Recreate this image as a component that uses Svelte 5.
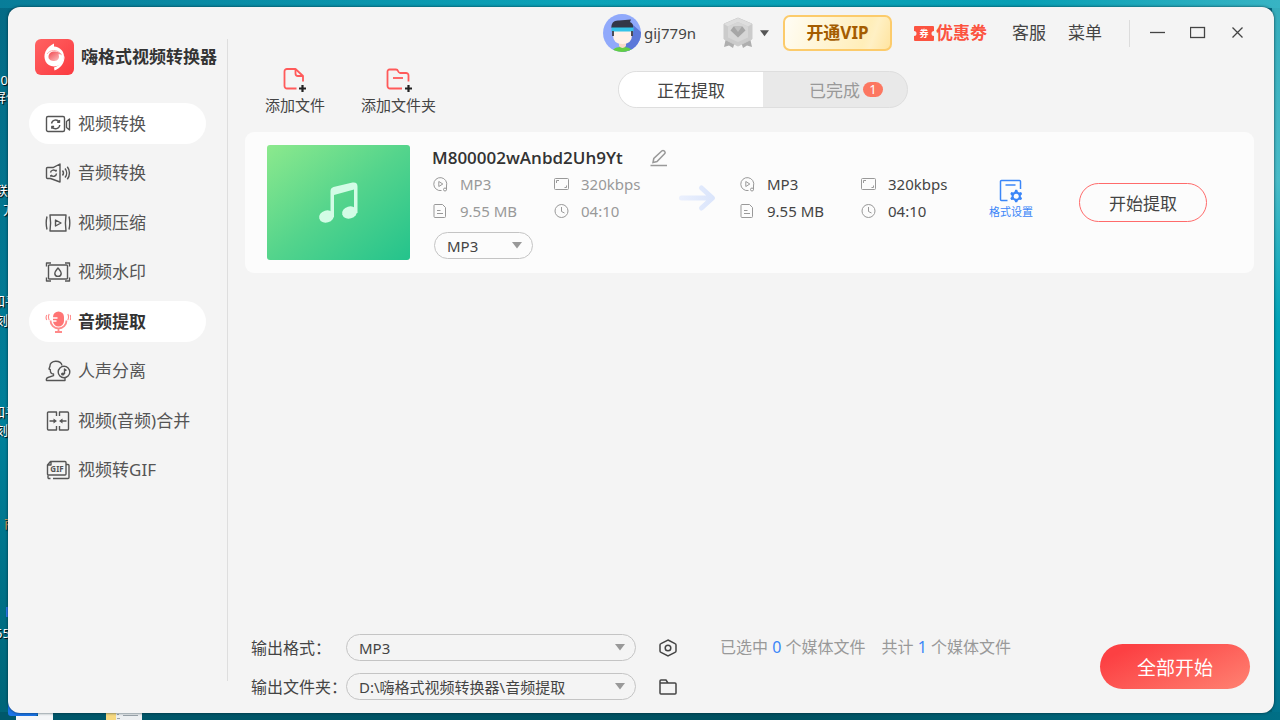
<script>
  const navItems = [
    { id: "video", label: "视频转换", hover: true },
    { id: "audio", label: "音频转换" },
    { id: "compress", label: "视频压缩" },
    { id: "watermark", label: "视频水印" },
    { id: "extract", label: "音频提取" },
    { id: "vocal", label: "人声分离" },
    { id: "merge", label: "视频(音频)合并" },
    { id: "gif", label: "视频转GIF" }
  ];

  const formats = ["MP3", "WAV", "M4A", "FLAC"];
  const folders = ["D:\\嗨格式视频转换器\\音频提取"];

  // Labels of the desktop shortcuts that stick out behind the window
  const shortcuts = [
    { text: "10", top: 71, left: -7 },
    { text: "屏保", top: 88, left: -7 },
    { text: "联系", top: 181, left: -5 },
    { text: "方", top: 200, left: 3 },
    { text: "知乎", top: 292, left: -8 },
    { text: "刻录", top: 311, left: -5 },
    { text: "知乎", top: 403, left: -8 },
    { text: "刻录", top: 421, left: -5 },
    { text: "商", top: 514, left: 4, orange: true },
    { text: "555", top: 624, left: -5 }
  ];

  const file = {
    name: "M800002wAnbd2Uh9Yt",
    format: "MP3",
    bitrate: "320kbps",
    size: "9.55 MB",
    duration: "04:10"
  };

  let active = $state("extract");
  let tab = $state("running");
  let rowFormat = $state("MP3");
  let outFormat = $state("MP3");
  let outFolder = $state(folders[0]);
</script>

{#snippet caret()}
  <svg class="caret" width="10" height="7" viewBox="0 0 10 7" aria-hidden="true">
    <path d="M0 0h10L5 6.5z" fill="currentColor" />
  </svg>
{/snippet}

{#snippet navIcon(id)}
  <svg class="nav-icon" viewBox="0 0 26 22" width="26" height="22" aria-hidden="true">
    {#if id === "video"}
      <rect x="1.5" y="3.5" width="18" height="15" rx="1.5" />
      <path d="M21.500 8.500l3-2.500v11l-3-2.500z" />
      <path d="M6.5 10.5a4.2 4.2 0 0 1 7.6-1.6M14.8 12a4.2 4.2 0 0 1-7.7 1.8M14.5 7v2.300h-2.300M6.800 15.800v-2.300h2.300" />
    {:else if id === "audio"}
      <path d="M8.500 5.500H2.500a1 1 0 0 0-1 1v9a1 1 0 0 0 1 1h3l9.500 3.500v-18L8 5.700" />
      <path d="M5.500 10.500a3 3 0 0 1 5.500-1M11.500 11.500a3 3 0 0 1-5.500 1.500M11.200 7.800v1.800M5.800 14.800V13" />
      <path d="M17.500 8.500a4 4 0 0 1 0 5M20 6.500a7 7 0 0 1 0 9M22.300 4.800a10 10 0 0 1 0 12.400" />
    {:else if id === "compress"}
      <path d="M5 3h16q-1.200 8 0 16H5q1.200-8 0-16z" />
      <path d="M2 4.500q-1.600 6.500 0 13M24 4.500q1.600 6.500 0 13M10.500 8v6l5.500-3z" />
    {:else if id === "watermark"}
      <path d="M1.500 5.500V2H6M20 2h4.500v3.500M24.500 16.500V20H20M6 20H1.500v-3.500" />
      <rect x="3.500" y="4" width="19" height="14" rx="1" />
      <path d="M13 7c2 2.500 3.200 3.600 3.200 5.200a3.200 3.200 0 0 1-6.400 0C9.800 10.600 11 9.500 13 7z" />
    {:else if id === "extract"}
      <g class="mic">
        <rect x="8" y="0.500" width="11" height="15" rx="5.500" fill="#ff7474" stroke="none" />
        <path d="M5.500 9.500a8 8 0 0 0 16 0M13.500 17.500V21M10 21h7" stroke-width="1.800" />
        <path d="M7.500 7h5M7.500 10h4" stroke="#fff" stroke-width="1.400" />
        <path d="M4.200 3q-1.500 3 0 6M1.800 4q-1.500 2.500 0 5M22.800 3q1.500 3 0 6M25.200 4q1 2.500 0 5" stroke-width="1.100" />
      </g>
    {:else if id === "vocal"}
      <path d="M17 5.500C16.500 2.500 14 1.200 10.800 1.200 7 1.200 4.800 3.500 5 6l-1 3 1.300.6c-.2 3 .7 4.200 3.200 4.400v1.700L3 17.500c-1.500.6-2 1.500-1.500 3H20v-2.500" />
      <circle cx="19" cy="12" r="5.800" />
      <path d="M19.500 14V9l2 1.500" />
      <ellipse cx="17.800" cy="14" rx="1.800" ry="1.500" fill="#555" stroke="none" />
    {:else if id === "merge"}
      <path d="M11.500 6V2H3.500a1 1 0 0 0-1 1v16a1 1 0 0 0 1 1h8v-4M14.500 6V2h8a1 1 0 0 1 1 1v16a1 1 0 0 1-1 1h-8v-4" />
      <path d="M4.500 11h5M21.500 11h-5" />
      <path d="M8.500 8.500v5l3.500-2.500zM17.500 8.500v5L14 11z" fill="#555" stroke="none" />
    {:else}
      <path d="M5.500 2.500H20a1 1 0 0 1 1 1V15a1 1 0 0 1-1 1H3.500a1 1 0 0 1-1-1V6zM6 2.500V6H2.500" />
      <path d="M21 5.500h2a1 1 0 0 1 1 1v12a1 1 0 0 1-1 1H8M5.500 19.500H4a1 1 0 0 1-1-1V16.500" />
      <text x="12" y="13" text-anchor="middle">GIF</text>
    {/if}
  </svg>
{/snippet}

{#snippet metaIcon(kind)}
  <svg class="meta-icon" viewBox="0 0 18 16" width="18" height="16" aria-hidden="true">
    {#if kind === "format"}
      <path d="M9.500 14.500A6.500 6.500 0 1 1 14.500 10" />
      <path d="M6.800 5.500v5L10.800 8z" />
      <circle cx="13" cy="13.500" r="1.500" />
      <path d="M14.500 13.500V10" />
    {:else if kind === "bitrate"}
      <rect x="1.500" y="2.500" width="14" height="11" rx="1" />
      <path d="M3.500 7V4.500H6M13.500 9.500v2H11.500" />
    {:else if kind === "size"}
      <path d="M3 1.500h7.500l3 3v9a1 1 0 0 1-1 1H3a1 1 0 0 1-1-1v-11a1 1 0 0 1 1-1z" />
      <path d="M5 7.500h3.500M5 10.500h6" />
    {:else}
      <circle cx="8.500" cy="8" r="6.500" />
      <path d="M8.500 4v4.500l3 1.500" />
    {/if}
  </svg>
{/snippet}

{#snippet meta(muted)}
  <ul class="meta" class:muted>
    <li>{@render metaIcon("format")}{file.format}</li>
    <li>{@render metaIcon("bitrate")}{file.bitrate}</li>
    <li>{@render metaIcon("size")}{file.size}</li>
    <li>{@render metaIcon("duration")}{file.duration}</li>
  </ul>
{/snippet}

<div class="desktop">
  {#each shortcuts as item}
    <span class="shortcut" class:orange={item.orange} style="top: {item.top}px; left: {item.left}px">{item.text}</span>
  {/each}
  <svg class="desk-files" width="150" height="120" viewBox="0 0 150 120" aria-hidden="true">
    <rect x="6" y="7" width="8" height="10" fill="#2f7df0" />
    <rect x="8" y="100" width="30" height="16" rx="3" fill="#1b74e8" />
    <rect x="16" y="116" width="37" height="4" fill="#f4f6f8" />
    <path d="M38 110h15v6H38z" fill="#f4f6f8" />
    <rect x="106" y="110" width="10" height="10" fill="#f7d980" />
    <rect x="116" y="110" width="26" height="10" fill="#eceff1" />
    <path d="M117 114.500h2M117 118.500h3M123 115.500h15" stroke="#9aa4aa" />
  </svg>

  <div class="window">
    <aside>
      <div class="brand">
        <svg width="39" height="36" viewBox="0 0 39 36" aria-hidden="true">
          <defs>
            <linearGradient id="brandRed" x1="0" y1="0" x2="1" y2="1">
              <stop offset="0" stop-color="#ff6262" />
              <stop offset="1" stop-color="#fb3a40" />
            </linearGradient>
            <linearGradient id="brandSwirl" x1="0" y1="0" x2="1" y2="1">
              <stop offset="0" stop-color="#f0474d" />
              <stop offset="1" stop-color="#ffd0d0" />
            </linearGradient>
          </defs>
          <rect width="39" height="36" rx="6" fill="url(#brandRed)" />
          <path d="M19 4.500c-3.500 1.500-7 4.500-8.500 8C7.500 19 11 27.500 19 27.500c5.500 0 10-4 10-10 0-5.500-4-9.500-10-10z" fill="#fff" />
          <path d="M19.500 31.500c6-2.500 10.500-7.500 10-15-1.500 6.500-5 10-10.500 12z" fill="#fff" />
          <path d="M13.500 18c0-3.500 2.500-5.500 6-5.500 3 0 7 1 7.500 4-1.500-1.500-3-1.500-3.500-1 1.500 3.500-.5 6.500-4 6.500-3.500 0-6-1.500-6-4z" fill="url(#brandSwirl)" />
          <path d="M12 15c3-4.500 9.500-4.500 13-1" fill="none" stroke="#ffb3b3" />
        </svg>
        <h1>嗨格式视频转换器</h1>
      </div>
      <nav>
        {#each navItems as item}
          <button
            class="nav-item"
            class:hover={item.hover}
            class:active={active === item.id}
            onclick={() => (active = item.id)}
          >
            {@render navIcon(item.id)}
            <span>{item.label}</span>
          </button>
        {/each}
      </nav>
    </aside>

    <main>
      <header>
        <button class="user">
          <svg width="38" height="38" viewBox="0 0 38 38" aria-hidden="true">
            <defs>
              <clipPath id="avatarClip"><circle cx="19" cy="19" r="19" /></clipPath>
            </defs>
            <g clip-path="url(#avatarClip)">
              <rect width="38" height="38" fill="#90a9fb" />
              <path d="M29 10l9 8v20H20z" fill="#5b78d9" />
              <path d="M9 38c1-4 5-5 10-5s10 1 10 5z" fill="#62cf45" />
              <path d="M16 26h7v6q-3.500 4-7 0z" fill="#f9d9c9" />
              <path d="M10 13h19v8q0 9-9.500 9T10 21z" fill="#fff1e9" />
              <path d="M8.500 14C8 9 11 6 16 6.500L28 5.500l-1 2.500c2.500 1 3.500 3 3 6z" fill="#333748" />
              <path d="M8.500 13.500h22v4h-22z" fill="#35c3e8" />
              <path d="M9 17h2v5H9zM28 17h2v5h-2z" fill="#4b4b57" />
            </g>
          </svg>
          <span>gij779n</span>
        </button>
        <button class="level" aria-label="会员等级">
          <svg width="32" height="32" viewBox="0 0 32 32" aria-hidden="true">
            <path d="M4 21l-2 9 5-1.500 4 2.500 2-6zM28 21l2 9-5-1.500-4 2.500-2-6z" fill="#aeaeae" />
            <path d="M16 1l14 6v15l-14 7-14-7V7z" fill="#cbcbcb" stroke="#cbcbcb" stroke-linejoin="round" />
            <path d="M16 1l14 6-4 2.500L16 5 6 9.500 2 7z" fill="#dedede" />
            <path d="M16 5l10 4.500v11L16 25 6 20.500v-11z" fill="#d6d6d6" />
            <path d="M11.500 9.500h9l3 4L16 20.500l-7.500-7z" fill="#a6a6a6" />
            <path d="M12 9.500h8l-4 5.500z" fill="#c0c0c0" />
          </svg>
          {@render caret()}
        </button>
        <button class="vip">开通VIP</button>
        <button class="coupon">
          <svg width="20" height="15" viewBox="0 0 20 15" aria-hidden="true">
            <path d="M1 0h18a1 1 0 0 1 1 1v4a2.500 2.500 0 0 0 0 5v4a1 1 0 0 1-1 1H1a1 1 0 0 1-1-1v-4a2.500 2.500 0 0 0 0-5V1a1 1 0 0 1 1-1z" fill="#fc5340" />
            <text x="10" y="11" text-anchor="middle">券</text>
          </svg>
          <span>优惠劵</span>
        </button>
        <button class="link">客服</button>
        <button class="link">菜单</button>
        <div class="window-controls">
          <button aria-label="最小化">
            <svg width="16" height="16" viewBox="0 0 16 16"><path d="M0 7.500h15" /></svg>
          </button>
          <button aria-label="最大化">
            <svg width="16" height="16" viewBox="0 0 16 16"><rect x="0.500" y="2.500" width="14" height="10" /></svg>
          </button>
          <button aria-label="关闭">
            <svg width="16" height="16" viewBox="0 0 16 16"><path d="M2.500 2.500l10 10M12.500 2.500l-10 10" /></svg>
          </button>
        </div>
      </header>

      <div class="toolbar">
        <button class="add">
          <svg width="26" height="26" viewBox="0 0 26 26" aria-hidden="true">
            <path d="M14.500 21.500H5a2.500 2.500 0 0 1-2.500-2.500V4.500A2.500 2.500 0 0 1 5 2h8.500l7.500 7v5.500" />
            <path d="M13.500 2v4.500A2.500 2.500 0 0 0 16 9h5" />
            <path class="plus" d="M20.500 18v7M17 21.500h7" />
          </svg>
          <span>添加文件</span>
        </button>
        <button class="add">
          <svg width="28" height="26" viewBox="0 0 28 26" aria-hidden="true">
            <path d="M17 21.500H5a2.500 2.500 0 0 1-2.500-2.500V4.500A2 2 0 0 1 4.500 2.500h6.500q1.500 0 2 1.500t2 2h6A2.500 2.500 0 0 1 23.500 8.500v6" />
            <path d="M8 11h10" />
            <path class="plus" d="M23.500 18v7M20 21.500h7" />
          </svg>
          <span>添加文件夹</span>
        </button>
        <div class="tabs" role="tablist">
          <button role="tab" aria-selected={tab === "running"} onclick={() => (tab = "running")}>正在提取</button>
          <button role="tab" aria-selected={tab === "done"} onclick={() => (tab = "done")}>
            已完成<span class="count">1</span>
          </button>
        </div>
      </div>

      <section class="card">
        <svg class="thumb" width="143" height="115" viewBox="0 0 143 115" aria-hidden="true">
          <defs>
            <linearGradient id="thumbGreen" x1="0" y1="0" x2="1" y2="1">
              <stop offset="0" stop-color="#8ce98d" />
              <stop offset="0.500" stop-color="#54d48c" />
              <stop offset="1" stop-color="#24c38c" />
            </linearGradient>
          </defs>
          <rect width="143" height="115" rx="3" fill="url(#thumbGreen)" />
          <g fill="#d3fce6">
            <ellipse cx="59.500" cy="71.500" rx="7.500" ry="6" transform="rotate(-15 59.500 71.500)" />
            <ellipse cx="82.500" cy="67.500" rx="7.500" ry="6" transform="rotate(-15 82.500 67.500)" />
            <path d="M63.500 72V46q0-3 3-4l19-4.500q5-.8 5 4V68h-3.500V44.500L67 50v22z" />
          </g>
        </svg>

        <div class="source">
          <div class="name">
            <h2>{file.name}</h2>
            <button aria-label="重命名">
              <svg width="18" height="18" viewBox="0 0 18 18">
                <path d="M0.500 16.500h16.500M3 13.500l.8-4L12 1.800q1-.8 2 0l.8.8q.8 1 0 2L7 12.500z" />
              </svg>
            </button>
          </div>
          {@render meta(true)}
          <div class="picker small">
            <select bind:value={rowFormat} aria-label="格式">
              {#each formats as f}<option>{f}</option>{/each}
            </select>
            {@render caret()}
          </div>
        </div>

        <svg class="arrow" width="38" height="28" viewBox="0 0 38 28" aria-hidden="true">
          <defs>
            <linearGradient id="arrowBlue" gradientUnits="userSpaceOnUse" x1="0" y1="0" x2="38" y2="0">
              <stop offset="0" stop-color="#ebf0fd" />
              <stop offset="1" stop-color="#d9e4fb" />
            </linearGradient>
          </defs>
          <path d="M2.500 14H33M22.500 4l11 10-11 10" />
        </svg>

        <div class="target">{@render meta(false)}</div>

        <button class="settings">
          <svg width="24" height="24" viewBox="0 0 24 24" aria-hidden="true">
            <path d="M8.500 21.500H2.500a1 1 0 0 1-1-1v-18a1 1 0 0 1 1-1h18a1 1 0 0 1 1 1V10M6.500 6h10" />
            <path d="M14.300 13.500l1.200-.8.700-2h2l.700 2 1.200.8 2-.4 1 1.800-1.300 1.600v1.300l1.300 1.500-1 1.800-2-.4-1.200.8-.7 1.800h-2l-.7-1.800-1.200-.8-2 .4-1-1.800 1.300-1.500v-1.300l-1.300-1.600 1-1.800z" fill="#3b86f8" stroke="none" />
            <circle cx="17.200" cy="17.200" r="2.500" fill="#fcfcfc" stroke="none" />
          </svg>
          <span>格式设置</span>
        </button>
        <button class="start">开始提取</button>
      </section>

      <footer>
        <div class="output">
          <label for="out-format">输出格式：</label>
          <div class="picker">
            <select id="out-format" bind:value={outFormat}>
              {#each formats as f}<option>{f}</option>{/each}
            </select>
            {@render caret()}
          </div>
          <button class="tool" aria-label="输出设置">
            <svg width="20" height="20" viewBox="0 0 20 20">
              <path d="M10 2l7 3.600q1 .4 1 1.400v6q0 1-1 1.400L10 18l-7-3.600q-1-.4-1-1.400V7q0-1 1-1.400z" />
              <circle cx="10" cy="10" r="2.800" />
            </svg>
          </button>

          <label for="out-folder">输出文件夹：</label>
          <div class="picker">
            <select id="out-folder" bind:value={outFolder}>
              {#each folders as f}<option>{f}</option>{/each}
            </select>
            {@render caret()}
          </div>
          <button class="tool" aria-label="打开文件夹">
            <svg width="20" height="20" viewBox="0 0 20 20">
              <path d="M3 17a1 1 0 0 1-1-1V4a1 1 0 0 1 1-1h5l2 3h7a1 1 0 0 1 1 1v9a1 1 0 0 1-1 1zM2 6h8" />
            </svg>
          </button>
        </div>

        <p class="status">
          <span>已选中 <b>0</b> 个媒体文件</span>
          <span>共计 <b>1</b> 个媒体文件</span>
        </p>
        <button class="start-all">全部开始</button>
      </footer>
    </main>
  </div>
</div>

<style>
  :global(body) {
    margin: 0;
    font-family: "Noto Sans", "Noto Sans CJK SC", sans-serif;
    color: #444;
  }

  * {
    box-sizing: border-box;
  }

  button {
    padding: 0;
    border: none;
    background: none;
    font: inherit;
    color: inherit;
    white-space: nowrap;
    cursor: pointer;
  }

  svg {
    display: block;
    flex: none;
  }

  h1,
  h2,
  p,
  ul {
    margin: 0;
    padding: 0;
  }

  .desktop {
    position: relative;
    display: flex;
    min-height: 100vh;
    padding: 7px 6px 7px 8px;
    overflow: hidden;
    background:
      linear-gradient(to right, #087d99, #0ba3b8 45%, #079fb4 80%, #38b4c4) top / 100% 8px no-repeat,
      linear-gradient(to right, #00586b, #00505f 60%, #006f86) bottom / 100% 8px no-repeat,
      linear-gradient(#35acbb, #49bcc8 25%, #00a3b7 45%, #008ea5 75%, #00718a) right / 8px 100% no-repeat,
      linear-gradient(#046a85, #00809a 60%, #006477);
  }

  .shortcut {
    position: absolute;
    font-size: 13px;
    line-height: 18px;
    color: #fff;
    white-space: nowrap;
    text-shadow: 1px 1px 1px #000;
  }

  .shortcut.orange {
    color: #f0a35c;
  }

  .desk-files {
    position: absolute;
    left: 0;
    bottom: 0;
  }

  .window {
    position: relative;
    display: flex;
    flex: 1;
    min-width: 0;
    border-radius: 12px;
    background: #f4f4f4;
    box-shadow: 0 0 3px rgba(0, 30, 40, 0.8);
  }

  aside {
    flex: none;
    width: 220px;
    margin: 32px 0;
    padding-left: 21px;
    border-right: 1px solid #dedede;
  }

  .brand {
    display: flex;
    align-items: center;
    gap: 7px;
    height: 36px;
    padding-left: 6px;
  }

  .brand h1 {
    font-size: 17px;
    line-height: 24px;
    font-weight: 700;
    color: #333;
    white-space: nowrap;
  }

  nav {
    display: flex;
    flex-direction: column;
    justify-content: space-between;
    height: 388px;
    margin-top: 28px;
  }

  .nav-item {
    display: flex;
    align-items: center;
    gap: 7px;
    width: 177px;
    height: 41px;
    padding-left: 16px;
    border-radius: 21px;
    font-size: 17px;
    line-height: 24px;
    color: #555;
  }

  .nav-item.hover,
  .nav-item.active {
    background: #fff;
  }

  .nav-item.active {
    font-weight: 700;
    color: #333;
  }

  .nav-icon {
    fill: none;
    stroke: #555;
    stroke-width: 1.4;
    stroke-linejoin: round;
  }

  .nav-icon text {
    fill: #555;
    stroke: none;
    font-size: 8px;
    font-weight: 700;
  }

  .mic {
    stroke: #ff8a8a;
  }

  main {
    display: flex;
    flex: 1;
    flex-direction: column;
    min-width: 0;
    padding: 7px 20px 13px 17px;
  }

  header {
    display: flex;
    align-items: center;
    justify-content: flex-end;
    height: 38px;
    font-size: 17px;
    line-height: 24px;
  }

  .user {
    display: flex;
    align-items: center;
    gap: 3px;
    font-size: 15px;
  }

  .level {
    display: flex;
    align-items: center;
    gap: 6px;
    margin-left: 26px;
    color: #555;
  }

  .level .caret {
    width: 9px;
  }

  .vip {
    width: 109px;
    height: 36px;
    margin-left: 14px;
    border: 2px solid #fccb6b;
    border-radius: 7px;
    background: linear-gradient(110deg, #fffdf5, #ffeeb9 75%, #fff0c4 82%, #ffe4a0);
    line-height: 24px;
    font-weight: 700;
    color: #a45c00;
  }

  .coupon {
    display: flex;
    align-items: center;
    gap: 2px;
    margin-left: 22px;
    font-weight: 700;
    color: #fc5340;
  }

  .coupon text {
    fill: #fff;
    font-size: 9px;
  }

  .link {
    margin-left: 22px;
  }

  .coupon + .link {
    margin-left: 25px;
  }

  .window-controls {
    display: flex;
    align-items: center;
    gap: 24px;
    height: 27px;
    margin-left: 27px;
    padding: 0 8px 0 20px;
    border-left: 1px solid #dcdcdc;
  }

  .window-controls svg {
    fill: none;
    stroke: #444;
    stroke-width: 1.3;
  }

  .toolbar {
    display: flex;
    align-items: flex-start;
    height: 56px;
    margin-top: 13px;
    padding-left: 20px;
  }

  .add {
    display: flex;
    flex-direction: column;
    align-items: center;
    gap: 2px;
    margin-top: 2px;
    font-size: 15px;
    line-height: 20px;
  }

  .add + .add {
    margin-left: 36px;
  }

  .add svg {
    fill: none;
    stroke: #ff5a5a;
    stroke-width: 1.8;
    stroke-linejoin: round;
  }

  .add .plus {
    stroke: #222;
    stroke-width: 2.2;
  }

  .tabs {
    display: grid;
    grid-template-columns: 1fr 1fr;
    width: 290px;
    height: 37px;
    margin: 6px 0 0 182px;
    border: 1px solid #dedede;
    border-radius: 19px;
    overflow: hidden;
    background: #e9e9e9;
    font-size: 17px;
  }

  .tabs button {
    display: flex;
    align-items: center;
    justify-content: center;
    color: #999;
  }

  .tabs button + button {
    padding-left: 22px;
  }

  .tabs button[aria-selected="true"] {
    background: #fff;
    color: #444;
  }

  .count {
    width: 20px;
    margin-left: 3px;
    border-radius: 8px;
    background: #fc7761;
    font-size: 13px;
    line-height: 15px;
    color: #fff;
  }

  .card {
    display: flex;
    align-items: center;
    margin-top: 11px;
    padding: 13px 47px 13px 22px;
    border-radius: 9px;
    background: #fcfcfc;
  }

  .thumb {
    margin-right: 22px;
  }

  .source {
    align-self: flex-start;
    width: 247px;
  }

  .name {
    display: flex;
    align-items: center;
    gap: 27px;
    height: 25px;
  }

  .name h2 {
    font-family: "Open Sans", "Noto Sans", sans-serif;
    font-size: 17px;
    line-height: 24px;
    font-weight: 600;
    color: #333;
  }

  .name svg {
    fill: none;
    stroke: #999;
    stroke-width: 1.5;
  }

  .meta {
    display: grid;
    grid-template-columns: 121px 1fr;
    grid-auto-rows: 27px;
    list-style: none;
    font-size: 15px;
    line-height: 20px;
    color: #444;
  }

  .meta.muted {
    color: #999;
  }

  .meta li {
    display: flex;
    align-items: center;
    gap: 10px;
    white-space: nowrap;
  }

  .meta-icon {
    fill: none;
    stroke: #999;
    stroke-width: 1;
  }

  .picker {
    display: grid;
    align-items: center;
    width: 290px;
    color: #999;
  }

  .picker select {
    grid-area: 1 / 1;
    width: 100%;
    height: 27px;
    padding: 0 32px 0 12px;
    border: 1px solid #c4c4c4;
    border-radius: 14px;
    appearance: none;
    background: transparent;
    font: inherit;
    font-size: 15px;
    color: #444;
  }

  .picker .caret {
    grid-area: 1 / 1;
    justify-self: end;
    margin-right: 11px;
    pointer-events: none;
  }

  .picker.small {
    width: 99px;
    margin: 8px 0 0 2px;
  }

  .arrow {
    align-self: flex-start;
    margin-top: 39px;
    fill: none;
    stroke: url(#arrowBlue);
    stroke-width: 5;
    stroke-linecap: round;
    stroke-linejoin: round;
  }

  .target {
    align-self: flex-start;
    width: 208px;
    margin: 25px auto 0 22px;
  }

  .settings {
    display: flex;
    flex-direction: column;
    align-items: center;
    gap: 1px;
    margin-bottom: 6px;
    font-size: 11px;
    line-height: 16px;
    color: #3b86f8;
  }

  .settings svg {
    fill: none;
    stroke: #3b86f8;
    stroke-width: 1.5;
  }

  .start {
    width: 128px;
    height: 39px;
    margin-left: 46px;
    border: 1px solid #ff6b6b;
    border-radius: 20px;
    font-size: 17px;
  }

  footer {
    display: flex;
    align-items: flex-start;
    margin-top: auto;
    padding: 0 4px 0 6px;
  }

  .output {
    display: grid;
    grid-template-columns: 95px 290px auto;
    row-gap: 12px;
    align-items: center;
    font-size: 16px;
    line-height: 20px;
    white-space: nowrap;
  }

  .output .tool {
    margin-left: 22px;
  }

  .tool svg {
    fill: none;
    stroke: #444;
    stroke-width: 1.5;
  }

  .status {
    display: flex;
    gap: 16px;
    margin: 3px auto 0 42px;
    font-size: 16px;
    line-height: 20px;
    color: #999;
    white-space: nowrap;
  }

  .status b {
    font-weight: 400;
    color: #3b86f8;
  }

  .start-all {
    width: 150px;
    height: 45px;
    margin-top: 10px;
    border-radius: 23px;
    background: linear-gradient(155deg, #fc4043 15%, #ff8272);
    font-size: 19px;
    color: #fff;
  }
</style>
